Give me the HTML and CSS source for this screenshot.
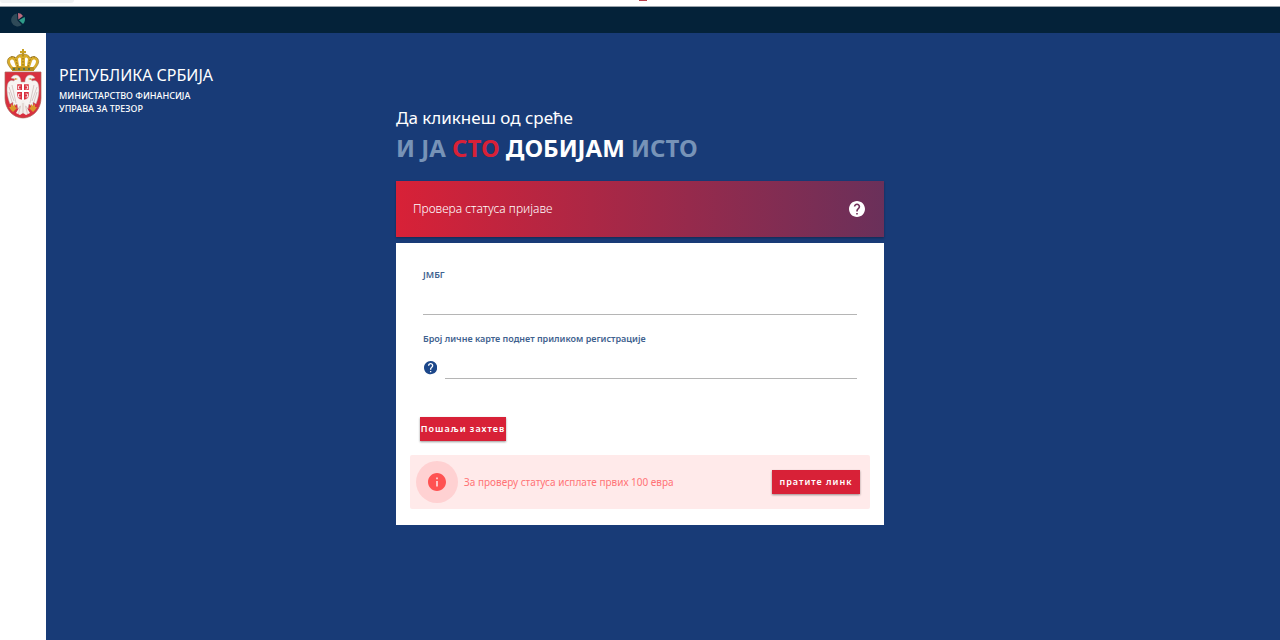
FILE: index.html
```html
<!DOCTYPE html>
<html lang="sr">
<head>
    <meta charset="UTF-8">
    <meta name="viewport" content="width=device-width, initial-scale=1.0">
    <title>Провера статуса пријаве</title>
    <link rel="stylesheet" href="styles.css">
</head>
<body>
    <!-- browser edge -->
    <div class="browser-edge">
        <div class="address-bar"></div>
        <div class="avatar-slot"><div class="avatar"></div></div>
    </div>

    <header class="topbar">
        <svg class="topbar-icon" viewBox="0 0 16 16" aria-hidden="true">
            <path fill="#2f4a58" d="M7 1.5A6.5 6.5 0 1 0 11.800 13L7.500 8.500z"/>
            <path fill="#bd6a7c" d="M8 1a6.500 6.500 0 0 1 5 3L8.300 7.400z"/>
            <path fill="#2f9c8a" d="M14.600 5A7 7 0 0 1 13 12L9 8.200z"/>
        </svg>
    </header>

    <div class="page">
        <div class="left">
            <aside class="sidebar">
                <!-- coat of arms -->
                <svg class="crest" viewBox="0 0 38 70" role="img" aria-label="Грб Републике Србије">
                    <path fill="#c9a227" d="M18 0h2v2h2v2h-2v3h-2V4h-2V2h2z"/>
                    <path fill="#d9ad2b" stroke="#8d6a1c" stroke-width=".6" d="M8 21C5 17 2 14 4 10c2-3 6-3 8-1 1-3 4-4 7-4s6 1 7 4c2-2 6-2 8 1 2 4-1 7-4 11z"/>
                    <path fill="#fff" d="M6 12c1-2 3-2 4 0l2 6h-3c-2-2-3-4-3-6zM32 12c-1-2-3-2-4 0l-2 6h3c2-2 3-4 3-6zM14 10c1-2 3-2 3 0v7h-2zM24 10c-1-2-3-2-3 0v7h2z"/>
                    <path fill="none" stroke="#8d6a1c" stroke-width="1" stroke-dasharray="1.500 1.500" d="M7 8c2-1 4 0 5 3l2 7M31 8c-2-1-4 0-5 3l-2 7M19 6v12"/>
                    <path fill="#b8901f" d="M8 18h22v4H8z"/>
                    <path stroke="#3a6b58" stroke-width="1.500" stroke-dasharray="2 3" d="M9 20h20"/>
                    <path fill="#d9303f" stroke="#a9685c" stroke-width=".7" d="M1 23h36v26c0 11-8 20-18 20S1 60 1 49z"/>
                    <path fill="#f7f4f2" stroke="#b9a8a5" stroke-width=".5" d="M17 33c0-4-2-7-5-7-2 0-4 1-5 3l4 1-1 2C5 30 3 34 3 41c0 6 2 11 3 14l3-2v5l4-3 1 5 3-4 2 4 2-4 3 4 1-5 4 3v-5l3 2c1-3 3-8 3-14 0-7-2-11-7-9l-1-2 4-1c-1-2-3-3-5-3-3 0-5 3-5 7z"/>
                    <path fill="none" stroke="#c8b6b4" stroke-width=".7" d="M5 38l5 14M8 36l4 18M33 38l-5 14M30 36l-4 18M5 43l3 10M33 43l-3 10"/>
                    <path fill="#d9303f" stroke="#fff" stroke-width=".5" d="M13 35h12v11c0 3-3 5-6 5s-6-2-6-5z"/>
                    <path fill="#fff" d="M18 35h2v6h5v2h-5v8h-2v-8h-5v-2h5z"/>
                    <path fill="none" stroke="#fff" stroke-width=".8" d="M16.500 37h-2v3h2M21.500 37h2v3h-2M16.500 45h-2v3h2M21.500 45h2v3h-2"/>
                    <path fill="#f3efec" d="M19 50l4 9 3 5-4 2-3-2-3 2-4-2 3-5z"/>
                    <path stroke="#c8aaa5" stroke-width=".6" d="M19 54v11M16.500 57l-2 8M21.500 57l2 8"/>
                    <path fill="#d99b2b" d="M7 55l2 2 2-2v3l2 1-2 2-2 2-2-2-2-3h2zM31 55l-2 2-2-2v3l-2 1 2 2 2 2 2-2 2-3h-2zM11 29l3 1-3 1zM27 29l-3 1 3 1z"/>
                </svg>
            </aside>
            <div class="brand">
                <p class="brand-title">РЕПУБЛИКА СРБИЈА</p>
                <p class="brand-sub">МИНИСТАРСТВО ФИНАНСИЈА</p>
                <p class="brand-sub">УПРАВА ЗА ТРЕЗОР</p>
            </div>
        </div>

        <main class="content">
            <p class="lead">Да кликнеш од среће</p>
            <h1 class="slogan">И ЈА <span class="red">СТО</span> <span class="white">ДОБИЈАМ</span> ИСТО</h1>

            <div class="card-header">
                <h2 class="card-title">Провера статуса пријаве</h2>
                <button type="button" class="help help-light" aria-label="Помоћ">
                    <svg viewBox="2 2 20 20" aria-hidden="true"><path fill="currentColor" d="M12 2C6.480 2 2 6.480 2 12s4.480 10 10 10 10-4.480 10-10S17.520 2 12 2zm1 17h-2v-2h2v2zm2.070-7.750l-.9.920C13.450 12.900 13 13.500 13 15h-2v-.5c0-1.100.45-2.100 1.170-2.830l1.240-1.260c.37-.36.590-.86.590-1.410 0-1.100-.9-2-2-2s-2 .9-2 2H8c0-2.210 1.790-4 4-4s4 1.790 4 4c0 .88-.36 1.680-.93 2.250z"/></svg>
                </button>
            </div>

            <form class="card">
                <div class="field">
                    <label for="jmbg">ЈМБГ</label>
                    <input type="text" id="jmbg">
                </div>
                <div class="field">
                    <label for="idcard">Број личне карте поднет приликом регистрације</label>
                    <div class="field-row">
                        <button type="button" class="help help-dark" aria-label="Помоћ">
                            <svg viewBox="2 2 20 20" aria-hidden="true"><path fill="currentColor" d="M12 2C6.480 2 2 6.480 2 12s4.480 10 10 10 10-4.480 10-10S17.520 2 12 2zm1 17h-2v-2h2v2zm2.070-7.750l-.9.920C13.450 12.900 13 13.500 13 15h-2v-.5c0-1.100.45-2.100 1.170-2.830l1.240-1.260c.37-.36.590-.86.590-1.410 0-1.100-.9-2-2-2s-2 .9-2 2H8c0-2.210 1.790-4 4-4s4 1.790 4 4c0 .88-.36 1.680-.93 2.250z"/></svg>
                        </button>
                        <input type="text" id="idcard">
                    </div>
                </div>
                <button type="submit" class="btn btn-submit">Пошаљи захтев</button>

                <div class="notice">
                    <span class="notice-icon">
                        <svg viewBox="2 2 20 20" aria-hidden="true"><path fill="currentColor" d="M12 2C6.480 2 2 6.480 2 12s4.480 10 10 10 10-4.480 10-10S17.520 2 12 2zm1 15h-2v-6h2v6zm0-8h-2V7h2v2z"/></svg>
                    </span>
                    <p class="notice-text">За проверу статуса исплате првих 100 евра</p>
                    <a href="#" class="btn btn-link">пратите линк</a>
                </div>
            </form>
        </main>
    </div>
</body>
</html>
```
FILE: styles.css
```css
* {
    box-sizing: border-box;
}

body {
    margin: 0;
    min-height: 100vh;
    display: flex;
    flex-direction: column;
    background: #183b77;
    color: #fff;
    font-family: "Source Sans Pro", "Noto Sans", sans-serif;
}

p, h1, h2 {
    margin: 0;
}

.browser-edge {
    display: grid;
    grid-template-columns: 74px 1fr 94px;
    height: 7px;
    background: #fff;
    border-bottom: 1px solid #9aa3ab;
}

.address-bar {
    height: 3px;
    background: #f1f3f4;
    border-radius: 0 0 10px 10px;
}

.avatar-slot {
    display: flex;
    justify-content: center;
    padding-left: 26px;
}

.avatar {
    width: 8px;
    height: 1px;
    background: #b8404c;
}

.topbar {
    display: flex;
    align-items: center;
    height: 26px;
    padding: 0 10px;
    background: #042239;
}

.topbar-icon {
    width: 16px;
    height: 16px;
}

.page {
    flex: 1;
    display: grid;
    grid-template-columns: 1fr minmax(0, 488px) 1fr;
}

.left {
    display: flex;
    gap: 13px;
}

.sidebar {
    width: 46px;
    padding: 16px 4px;
    background: #fff;
}

.crest {
    display: block;
    width: 38px;
    height: 70px;
}

.brand {
    padding-top: 30px;
}

.brand-title {
    font-size: 16px;
    line-height: 24px;
    margin-bottom: 2px;
}

.brand-sub {
    font-size: 9px;
    line-height: 13px;
    font-weight: 500;
}

.content {
    padding-top: 72px;
}

.lead {
    font-size: 17px;
    line-height: 26px;
}

.slogan {
    font-size: 24px;
    line-height: 34px;
    margin-bottom: 16px;
    color: #7793b7;
}

.red {
    color: #d82137;
}

.white {
    color: #fff;
}

.card-header {
    display: flex;
    align-items: center;
    justify-content: space-between;
    height: 56px;
    padding: 0 19px 0 17px;
    margin-bottom: 6px;
    background: linear-gradient(90deg, #d82137, #6a305a);
    box-shadow: 0 1px 2px rgba(0, 0, 0, 0.3);
}

.card-title {
    font-size: 12px;
    line-height: 18px;
    font-weight: 300;
}

.help {
    display: flex;
    padding: 0;
    border: 0;
    background: none;
}

.help svg {
    width: 100%;
}

.help-light {
    width: 16px;
    color: #fff;
}

.help-dark {
    width: 14px;
    color: #1c478a;
}

.card {
    padding: 24px 14px 16px;
    background: #fff;
}

.field {
    padding: 0 13px;
    margin-bottom: 16px;
}

.field label {
    display: block;
    font-size: 9px;
    line-height: 16px;
    font-weight: 600;
    color: #3f628f;
}

.field input {
    display: block;
    width: 100%;
    height: 32px;
    padding: 8px 0;
    border: 0;
    border-bottom: 1px solid #b5b5b5;
    background: none;
    font: 12px "Noto Sans", sans-serif;
    outline: none;
}

.field-row {
    display: flex;
    align-items: center;
    gap: 8px;
}

.field-row .help {
    padding: 10px 0 0;
    margin-left: 1px;
}

.btn {
    height: 24px;
    border: 0;
    background: #d82137;
    color: #fff;
    font: 600 9px/24px "Noto Sans", sans-serif;
    letter-spacing: 1px;
    text-align: center;
    text-decoration: none;
    box-shadow: 0 1px 2px rgba(0, 0, 0, 0.4);
}

.btn-submit {
    display: block;
    width: 86px;
    padding: 0;
    margin: 38px 0 14px 10px;
    white-space: nowrap;
}

.btn-link {
    width: 88px;
}

.notice {
    display: flex;
    align-items: center;
    gap: 6px;
    padding: 6px 10px 6px 6px;
    border-radius: 2px;
    background: #ffeaea;
}

.notice-icon {
    display: flex;
    padding: 12px;
    border-radius: 50%;
    background: #ffd1d2;
    color: #ff5252;
}

.notice-icon svg {
    width: 18px;
    height: 18px;
}

.notice-text {
    flex: 1;
    font-size: 10px;
    line-height: 16px;
    color: #ff7376;
}
```
